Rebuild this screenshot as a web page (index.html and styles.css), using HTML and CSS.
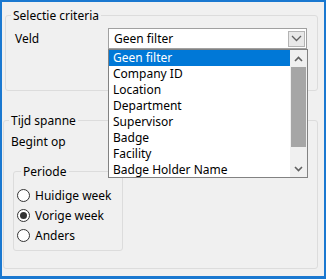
FILE: index.html
```html
<!DOCTYPE html>
<html>
<head>
<meta charset="utf-8">
<link rel="stylesheet" href="styles.css">
</head>
<body>
<div class="frame">
  <fieldset class="group group-criteria">
    <legend class="legend">Selectie criteria</legend>
    <div class="field-row">
      <span class="label">Veld</span>
      <div class="combo">
        <span class="combo-text">Geen filter</span>
        <span class="combo-btn">
          <svg width="11" height="7" viewBox="0 0 11 7"><path d="M1 1 L5.5 5.5 L10 1" fill="none" stroke="#606060" stroke-width="1.3"/></svg>
        </span>
        <div class="dropdown">
          <ul class="items">
            <li class="item selected">Geen filter</li>
            <li class="item">Company ID</li>
            <li class="item">Location</li>
            <li class="item">Department</li>
            <li class="item">Supervisor</li>
            <li class="item">Badge</li>
            <li class="item">Facility</li>
            <li class="item">Badge Holder Name</li>
          </ul>
          <div class="scrollbar">
            <span class="sb-arrow">
              <svg width="9" height="6" viewBox="0 0 9 6"><path d="M1 5 L4.5 1.5 L8 5" fill="none" stroke="#606060" stroke-width="1.6"/></svg>
            </span>
            <span class="sb-thumb"></span>
            <span class="sb-track"></span>
            <span class="sb-arrow">
              <svg width="9" height="6" viewBox="0 0 9 6"><path d="M1 1 L4.5 4.5 L8 1" fill="none" stroke="#606060" stroke-width="1.6"/></svg>
            </span>
          </div>
        </div>
      </div>
    </div>
  </fieldset>

  <fieldset class="group group-time">
    <legend class="legend">Tijd spanne</legend>
    <div class="begin-label">Begint op</div>
    <fieldset class="group group-period">
      <legend class="legend legend-period">Periode</legend>
      <div class="radio-row"><span class="radio"></span><span>Huidige week</span></div>
      <div class="radio-row"><span class="radio checked"></span><span>Vorige week</span></div>
      <div class="radio-row"><span class="radio"></span><span>Anders</span></div>
    </fieldset>
  </fieldset>
</div>
</body>
</html>
```

FILE: styles.css
```css
* { box-sizing: border-box; }
html, body { margin: 0; padding: 0; }
body {
  font-family: "Noto Sans", "Liberation Sans", sans-serif;
  font-size: 12px;
  line-height: 15px;
  color: #000;
  background: #f0f0f0;
}
.frame {
  width: 326px;
  height: 279px;
  border: 2px solid #1a78d0;
  border-bottom-width: 3px;
  background: #f0f0f0;
  overflow: hidden;
  display: flex;
  flex-direction: column;
}
.group {
  border: 1px solid #dcdcdc;
  border-radius: 3px;
  margin: 0;
  padding: 0;
  min-width: 0;
}
.legend {
  padding: 0 2px;
  margin-left: 5px;
  line-height: 15px;
}
.group-criteria {
  margin: 6px 6px 0 3px;
  padding: 0 0 41px 0;
}
.field-row {
  display: flex;
  align-items: center;
  margin-top: 5px;
  padding-left: 9px;
}
.label {
  width: 93px;
}
.combo {
  position: relative;
  width: 199px;
  height: 21px;
  background: #fff;
  border: 1px solid #a0a0a0;
  display: flex;
  align-items: center;
  justify-content: space-between;
  padding: 0 1px 0 5px;
}
.combo-btn {
  width: 17px;
  height: 16px;
  border: 1px solid #b4b4b4;
  background: #e8e8e8;
  display: flex;
  align-items: center;
  justify-content: center;
}
.dropdown {
  position: absolute;
  left: -1px;
  top: 20px;
  width: 200px;
  height: 129px;
  border: 1px solid #828282;
  background: #fff;
  display: flex;
  z-index: 2;
}
.items {
  list-style: none;
  margin: 0;
  padding: 0;
  flex: 1;
}
.item {
  height: 16px;
  line-height: 16px;
  padding-left: 4px;
  white-space: nowrap;
}
.item.selected {
  background: #0078d7;
  color: #fff;
}
.scrollbar {
  width: 17px;
  display: flex;
  flex-direction: column;
  background: #f0f0f0;
}
.sb-arrow {
  height: 17px;
  display: flex;
  align-items: center;
  justify-content: center;
}
.sb-thumb {
  height: 80px;
  background: #a6a6a6;
  margin: 0 1px;
}
.sb-track { flex: 1; }
.group-time {
  margin: 22px 6px 0 1px;
  padding: 0 0 17px 0;
}
.begin-label {
  margin-top: 6px;
  padding-left: 7px;
}
.group-period {
  width: 110px;
  margin: 15px 0 0 9px;
  padding: 6px 0 5px 0;
}
.legend-period {
  margin-left: 7px;
}
.radio-row {
  height: 20px;
  display: flex;
  align-items: center;
  gap: 5px;
  padding-left: 3px;
}
.radio {
  width: 13px;
  height: 13px;
  border: 1px solid #333;
  border-radius: 50%;
  background: #fff;
  display: flex;
  align-items: center;
  justify-content: center;
}
.radio.checked::after {
  content: "";
  width: 7px;
  height: 7px;
  border-radius: 50%;
  background: #333;
}
```
